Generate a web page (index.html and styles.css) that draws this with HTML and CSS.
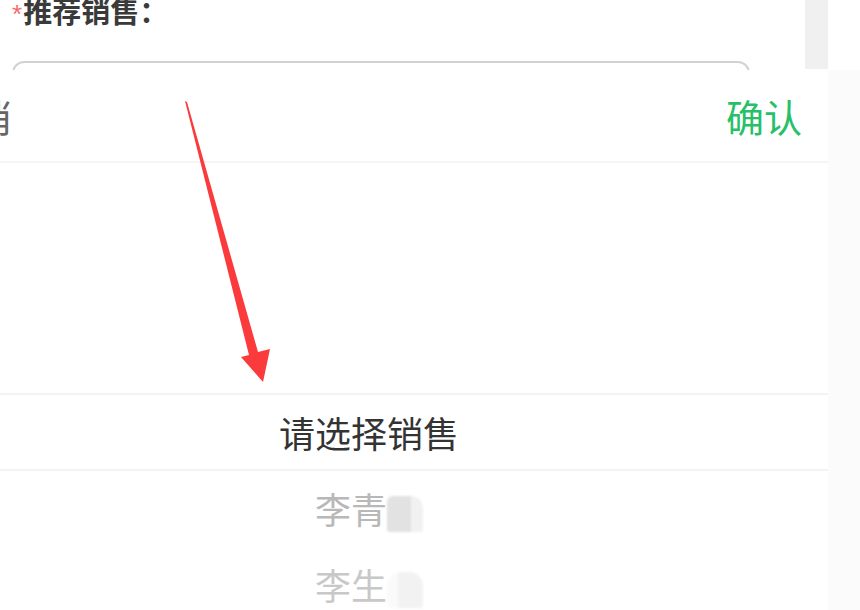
FILE: index.html
```html
<!DOCTYPE html>
<html lang="zh">
<head>
<meta charset="utf-8">
<link rel="stylesheet" href="styles.css">
</head>
<body>
<div class="page">
  <div class="form">
    <div class="label"><span class="req">*</span>推荐销售：</div>
    <div class="input"></div>
  </div>
  <div class="side"></div>
</div>
<div class="overlay">
  <div class="popup">
    <div class="header">
      <span class="cancel">取消</span>
      <span class="confirm">确认</span>
    </div>
    <div class="picker">
      <div class="band"></div>
      <div class="item selected">请选择销售</div>
      <div class="item near">李青<span class="blob b1"></span></div>
      <div class="item far">李生<span class="blob b2"></span></div>
    </div>
  </div>
</div>
<svg class="arrow" width="860" height="610" viewBox="0 0 860 610">
  <polygon points="185,101 187,102 258,352 270,349 263,382 241,357 249,355" fill="#fb3a3b"/>
</svg>
</body>
</html>
```
FILE: styles.css
```css
html, body {
  margin: 0;
  padding: 0;
  background: #ffffff;
  width: 860px;
  height: 610px;
  overflow: hidden;
  font-family: "Noto Sans CJK SC", "Noto Sans", sans-serif;
}
.page {
  display: flex;
  width: 828px;
}
.form {
  flex: 1;
  padding-left: 12px;
  padding-right: 55px;
}
.label {
  font-size: 29px;
  font-weight: bold;
  color: #3a3a3a;
  line-height: 29px;
  margin-top: -4px;
  display: flex;
  align-items: flex-start;
}
.req {
  color: #f56c6c;
  font-family: "Liberation Sans", sans-serif;
  font-size: 26px;
  font-weight: normal;
  line-height: 26px;
  margin-top: 5px;
  margin-right: 1px;
}
.input {
  margin-top: 34px;
  height: 40px;
  border: 2px solid #d2d2d2;
  border-radius: 12px;
}
.side {
  width: 23px;
  height: 69px;
  background: #f0f0f0;
}
.overlay {
  position: absolute;
  top: 70px;
  left: 0;
  right: 0;
  bottom: 0;
  background: #fbfbfb;
  overflow: hidden;
}
.popup {
  position: absolute;
  top: 0;
  left: -90px;
  width: 918px;
  height: 700px;
  background: #ffffff;
}
.header {
  height: 91px;
  display: flex;
  justify-content: space-between;
  align-items: center;
  padding: 0 26px;
  border-bottom: 2px solid #f5f5f5;
  font-size: 38px;
}
.cancel {
  color: #666666;
}
.confirm {
  color: #27c068;
}
.picker {
  position: relative;
  padding-top: 231px;
  display: flex;
  flex-direction: column;
}
.band {
  position: absolute;
  left: 0;
  right: 0;
  top: 230px;
  height: 74px;
  border-top: 2px solid #f3f3f3;
  border-bottom: 2px solid #f3f3f3;
}
.item {
  height: 76px;
  line-height: 76px;
  text-align: center;
  font-size: 36px;
  color: #333333;
}
.item.near {
  color: #b8b8b8;
}
.item.far {
  color: #c8c8c8;
}
.blob {
  display: inline-block;
  width: 36px;
  height: 36px;
  vertical-align: middle;
  position: relative;
}
.b1 {
  background: linear-gradient(to right, #e2e2e2 0 66%, #f1f1f1 66% 100%);
  border-radius: 6px 12px 2px 2px;
  filter: blur(1px);
}
.b2 {
  background: linear-gradient(to right, #fafafa 0 30%, #f2f2f2 30% 100%);
  border-radius: 14px 14px 4px 4px;
  filter: blur(1px);
}
.arrow {
  position: absolute;
  top: 0;
  left: 0;
}
```
